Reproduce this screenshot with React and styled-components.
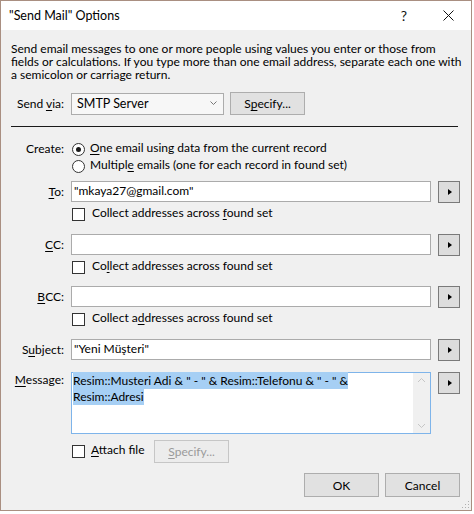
import React from 'react'
import styled, { createGlobalStyle } from 'styled-components'

const GlobalStyle = createGlobalStyle`
	html, body {
		margin: 0;
		padding: 0;
		background: #ffffff;
	}
	body {
		font-family: Lato, "Noto Sans", sans-serif;
		font-size: 12px;
		color: #000;
	}
`

const Window = styled.div`
	position: relative;
	width: 470px;
	height: 509px;
	border: 1px solid #a98f81;
	background: #f0f0f0;
	display: flex;
	flex-direction: column;
`

const TitleBar = styled.div`
	height: 29px;
	background: #ffffff;
	display: flex;
	align-items: center;
	padding-left: 8px;
`

const Title = styled.div`
	flex: 1;
	font-size: 12.5px;
	white-space: nowrap;
`

const TitleButton = styled.div`
	width: ${(p) => p.$w}px;
	height: 29px;
	display: flex;
	align-items: center;
	justify-content: center;
	font-size: 14px;
	color: #111;
`

const Body = styled.div`
	flex: 1;
	padding: 12px 11px 0 10px;
	display: flex;
	flex-direction: column;
`

const Description = styled.p`
	margin: 0;
	line-height: 13px;
	white-space: nowrap;
`

const Row = styled.div`
	display: flex;
	align-items: ${(p) => (p.$center ? 'center' : 'flex-start')};
	margin-top: ${(p) => p.$top || 0}px;
`

const Label = styled.div`
	width: 53px;
	flex-shrink: 0;
	text-align: right;
	line-height: ${(p) => p.$lh || 21}px;
	white-space: nowrap;
`

const U = styled.span`
	text-decoration: underline;
	text-underline-offset: 2px;
`

const Select = styled.div`
	margin-left: 7px;
	width: 153px;
	height: 22px;
	box-sizing: border-box;
	border: 1px solid #acacac;
	background: #f7f7f7;
	display: flex;
	align-items: center;
	padding: 0 6px 0 5px;
`

const SelectText = styled.span`
	flex: 1;
	font-size: 12.5px;
`

const Button = styled.div`
	box-sizing: border-box;
	width: 75px;
	flex-shrink: 0;
	height: ${(p) => p.$h || 23}px;
	margin-left: ${(p) => p.$ml || 0}px;
	border: 1px solid ${(p) => (p.$disabled ? '#c6c6c6' : '#adadad')};
	background: ${(p) => (p.$disabled ? '#ececec' : '#e1e1e1')};
	color: ${(p) => (p.$disabled ? '#9a9a9a' : '#000')};
	display: flex;
	align-items: center;
	justify-content: center;
	white-space: nowrap;
`

const Divider = styled.div`
	width: 447px;
	height: 1px;
	background: #1a1a1a;
	margin-top: 11px;
`

const Indent = styled.div`
	width: ${(p) => p.$w || 61}px;
	flex-shrink: 0;
`

const Radio = styled.span`
	box-sizing: border-box;
	width: 13px;
	height: 13px;
	border-radius: 50%;
	border: 1px solid #333;
	background: #fff;
	display: flex;
	align-items: center;
	justify-content: center;
	&::after {
		content: '';
		width: 5px;
		height: 5px;
		border-radius: 50%;
		background: ${(p) => (p.$checked ? '#1a1a1a' : 'transparent')};
	}
`

const OptionText = styled.span`
	margin-left: 5px;
	line-height: 18px;
	margin-top: -2px;
	white-space: nowrap;
`

const Field = styled.div`
	box-sizing: border-box;
	margin-left: 7px;
	width: 360px;
	height: 21px;
	border: 1px solid #ababab;
	background: #fff;
	padding: 0 2px;
	line-height: 18px;
	white-space: nowrap;
`

const ArrowButton = styled.div`
	box-sizing: border-box;
	margin-left: 7px;
	width: 22px;
	height: 22px;
	border: 1px solid #7a7a7a;
	background: #dddddd;
	display: flex;
	align-items: center;
	justify-content: center;
	&::after {
		content: '';
		margin-left: 2px;
		border-top: 3.5px solid transparent;
		border-bottom: 3.5px solid transparent;
		border-left: 4px solid #000;
	}
`

const CheckArea = styled.div`
	display: flex;
	align-items: center;
	width: ${(p) => (p.$w ? `${p.$w}px` : 'auto')};
	flex-shrink: 0;
`

const CheckBox = styled.span`
	box-sizing: border-box;
	width: 13px;
	height: 13px;
	border: 1px solid #333;
	background: #fff;
	flex-shrink: 0;
`

const CheckText = styled.span`
	margin-left: ${(p) => p.$ml || 7}px;
	line-height: 13px;
	margin-top: -4px;
	white-space: nowrap;
`

const MessageBox = styled.div`
	box-sizing: border-box;
	margin-left: 7px;
	width: 360px;
	height: 62px;
	border: 1px solid #7eb4ea;
	background: #fff;
	display: flex;
`

const MessageText = styled.div`
	flex: 1;
	padding: 0 1px;
	line-height: 16px;
	white-space: nowrap;
`

const Selected = styled.span`
	background: #a6cff4;
	padding: 1px 0;
`

const ScrollTrack = styled.div`
	width: 17px;
	background: #f0f0f0;
	display: flex;
	flex-direction: column;
	justify-content: space-between;
	align-items: center;
	padding: 4px 0;
`

const Footer = styled.div`
	display: flex;
	justify-content: flex-end;
	gap: 6px;
	margin-top: 10px;
`

const Grip = styled.svg`
	position: absolute;
	right: 1px;
	bottom: 1px;
`

const Chevron = ({ up }) => (
	<svg width="9" height="6" viewBox="0 0 9 6">
		<polyline
			points={up ? '1,5 4.5,1.5 8,5' : '1,1 4.5,4.5 8,1'}
			fill="none"
			stroke="#c6c6c6"
			strokeWidth="1"
		/>
	</svg>
)

const InputRow = ({ label, top, value }) => (
	<Row $top={top}>
		<Label>{label}</Label>
		<Field>{value}</Field>
		<ArrowButton />
	</Row>
)

const CheckRow = ({ top, children }) => (
	<Row $top={top} $center>
		<Indent />
		<CheckArea>
			<CheckBox />
			<CheckText>{children}</CheckText>
		</CheckArea>
	</Row>
)

export default function App() {
	return (
		<>
			<GlobalStyle />
			<Window>
				<TitleBar>
					<Title>"Send Mail" Options</Title>
					<TitleButton $w={44}>?</TitleButton>
					<TitleButton $w={45}>
						<svg width="11" height="11" viewBox="0 0 11 11">
							<path d="M0.5 0.5 L10.5 10.5 M10.5 0.5 L0.5 10.5" stroke="#111" strokeWidth="1" />
						</svg>
					</TitleButton>
				</TitleBar>
				<Body>
					<Description>
						Send email messages to one or more people using values you enter or those from
						<br />
						fields or calculations. If you type more than one email address, separate each one with
						<br />
						a semicolon or carriage return.
					</Description>

					<Row $top={11} $center>
						<Label $lh={22}>
							Send <U>v</U>ia:
						</Label>
						<Select>
							<SelectText>SMTP Server</SelectText>
							<svg width="7" height="5" viewBox="0 0 7 5">
								<polyline points="0.5,0.5 3.5,3.5 6.5,0.5" fill="none" stroke="#777" strokeWidth="1" />
							</svg>
						</Select>
						<Button $ml={6}>
							S<U>p</U>ecify...
						</Button>
					</Row>

					<Divider />

					<Row $top={13} $center>
						<Label $lh={18}>Create:</Label>
						<Indent $w={8} />
						<Radio $checked />
						<OptionText>
							<U>O</U>ne email using data from the current record
						</OptionText>
					</Row>
					<Row $center>
						<Indent />
						<Radio />
						<OptionText>
							Multipl<U>e</U> emails (one for each record in found set)
						</OptionText>
					</Row>

					<InputRow
						top={7}
						label={
							<>
								<U>T</U>o:
							</>
						}
						value={'"mkaya27@gmail.com"'}
					/>
					<CheckRow top={5}>
						Collect addresses across <U>f</U>ound set
					</CheckRow>

					<InputRow
						top={13}
						label={
							<>
								<U>C</U>C:
							</>
						}
					/>
					<CheckRow top={5}>
						Co<U>l</U>lect addresses across found set
					</CheckRow>

					<InputRow
						top={12}
						label={
							<>
								<U>B</U>CC:
							</>
						}
					/>
					<CheckRow top={5}>
						Collect a<U>d</U>dresses across found set
					</CheckRow>

					<InputRow
						top={13}
						label={
							<>
								S<U>u</U>bject:
							</>
						}
						value={'"Yeni Müşteri"'}
					/>

					<Row $top={11}>
						<Label $lh={16}>
							<U>M</U>essage:
						</Label>
						<MessageBox>
							<MessageText>
								<Selected>Resim::Musteri Adi &amp; " - " &amp; Resim::Telefonu &amp; " - " &amp;</Selected>
								<br />
								<Selected>Resim::Adresi</Selected>
							</MessageText>
							<ScrollTrack>
								<Chevron up />
								<Chevron />
							</ScrollTrack>
						</MessageBox>
						<ArrowButton />
					</Row>

					<Row $top={6} $center>
						<Indent />
						<CheckArea $w={82}>
							<CheckBox />
							<CheckText $ml={6}>
								<U>A</U>ttach file
							</CheckText>
						</CheckArea>
						<Button $disabled>
							<U>S</U>pecify...
						</Button>
					</Row>

					<Footer>
						<Button $h={24}>OK</Button>
						<Button $h={24}>Cancel</Button>
					</Footer>
				</Body>
				<Grip width="10" height="10" viewBox="0 0 10 10">
					{[
						[8, 2],
						[8, 5],
						[5, 5],
						[8, 8],
						[5, 8],
						[2, 8],
					].map(([x, y]) => (
						<rect key={`${x}-${y}`} x={x} y={y} width="1" height="1" fill="#b0b0b0" />
					))}
				</Grip>
			</Window>
		</>
	)
}
